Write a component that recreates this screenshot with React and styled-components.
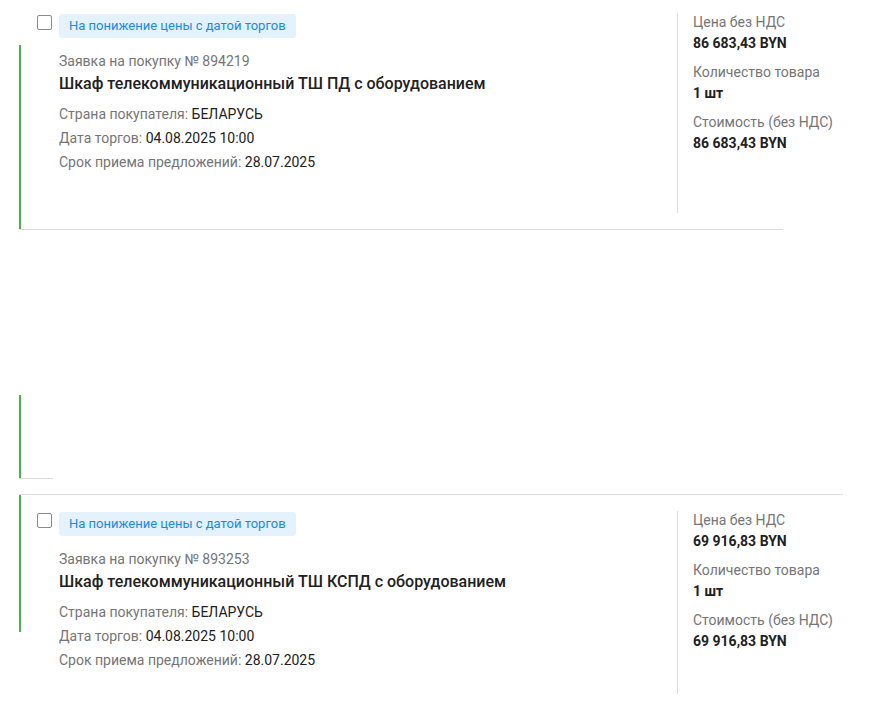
import React from 'react';
import styled, { createGlobalStyle } from 'styled-components';

const GlobalStyle = createGlobalStyle`
    body {
        margin: 0;
        background: #fff;
        font-family: Roboto, "Liberation Sans", sans-serif;
        color: #212121;
    }
`;

const List = styled.div`
    margin-top: -3px;
    padding-left: 19px;
    display: flex;
    flex-direction: column;
`;

const Card = styled.div`
    display: flex;
    width: ${p => p.$width}px;
    border-top: ${p => (p.$topLine ? '1px solid #dcdcdc' : 'none')};
    border-bottom: ${p => (p.$bottomLine ? '1px solid #dcdcdc' : 'none')};
    margin-top: ${p => p.$gap || 0}px;
    min-height: ${p => p.$minHeight || 0}px;
    box-sizing: border-box;
`;

const Rail = styled.div`
    flex: none;
    width: 2px;
    background: #4caf50;
    margin-top: ${p => p.$top}px;
    align-self: ${p => (p.$height ? 'flex-start' : 'stretch')};
    height: ${p => (p.$height ? `${p.$height}px` : 'auto')};
`;

const Body = styled.div`
    display: flex;
    padding: ${p => p.$padTop}px 0 ${p => p.$padBottom}px;
`;

const Main = styled.div`
    width: 656px;
    flex: none;
    box-sizing: border-box;
    padding: 1px 0 0 16px;
`;

const Header = styled.div`
    display: flex;
    align-items: flex-start;
    gap: 7px;
`;

const Check = styled.span`
    width: 15px;
    height: 15px;
    margin-top: 1px;
    box-sizing: border-box;
    border: 1.5px solid #8a8a8a;
    border-radius: 2px;
    background: #fff;
`;

const Badge = styled.span`
    height: 24px;
    line-height: 24px;
    padding: 0 10px;
    border-radius: 3px;
    background: #e3f2fd;
    color: #1e88e5;
    font-size: 13px;
`;

const Details = styled.div`
    padding-left: 22px;
`;

const Number = styled.div`
    margin-top: 13px;
    font-size: 14px;
    line-height: 20px;
    color: #757575;
`;

const Title = styled.div`
    margin-top: 2px;
    margin-bottom: 7px;
    font-size: 16px;
    line-height: 22px;
    font-weight: 500;
    color: #212121;
`;

const Meta = styled.div`
    font-size: 14px;
    line-height: 24px;
    color: #757575;
    span {
        color: #212121;
    }
`;

const Side = styled.div`
    flex: none;
    min-height: ${p => p.$height}px;
    border-left: 1px solid #dcdcdc;
    padding-left: 15px;
    white-space: nowrap;
`;

const Field = styled.div`
    margin-bottom: 10px;
`;

const Label = styled.div`
    font-size: 14px;
    line-height: 18px;
    color: #757575;
`;

const Value = styled.div`
    margin-top: 2px;
    font-size: 14px;
    line-height: 20px;
    font-weight: 700;
    color: #212121;
`;

const lots = [
    {
        id: 894219,
        title: 'Шкаф телекоммуникационный ТШ ПД с оборудованием',
        price: '86 683,43 BYN',
        width: 764,
        rail: { top: 48 },
        pad: [16, 16],
        side: 200,
        bottomLine: true,
    },
    {
        id: 893253,
        title: 'Шкаф телекоммуникационный ТШ КСПД с оборудованием',
        price: '69 916,83 BYN',
        width: 824,
        rail: { top: 0, height: 137 },
        pad: [16, 17],
        side: 183,
        topLine: true,
        gap: 15,
    },
];

const LotCard = ({ lot }) => (
    <Card $width={lot.width} $topLine={lot.topLine} $bottomLine={lot.bottomLine} $gap={lot.gap}>
        <Rail $top={lot.rail.top} $height={lot.rail.height} />
        <Body $padTop={lot.pad[0]} $padBottom={lot.pad[1]}>
            <Main>
                <Header>
                    <Check />
                    <Badge>На понижение цены с датой торгов</Badge>
                </Header>
                <Details>
                    <Number>Заявка на покупку № {lot.id}</Number>
                    <Title>{lot.title}</Title>
                    <Meta>Страна покупателя: <span>БЕЛАРУСЬ</span></Meta>
                    <Meta>Дата торгов: <span>04.08.2025 10:00</span></Meta>
                    <Meta>Срок приема предложений: <span>28.07.2025</span></Meta>
                </Details>
            </Main>
            <Side $height={lot.side}>
                <Field>
                    <Label>Цена без НДС</Label>
                    <Value>{lot.price}</Value>
                </Field>
                <Field>
                    <Label>Количество товара</Label>
                    <Value>1 шт</Value>
                </Field>
                <Field>
                    <Label>Стоимость (без НДС)</Label>
                    <Value>{lot.price}</Value>
                </Field>
            </Side>
        </Body>
    </Card>
);

const App = () => (
    <>
        <GlobalStyle />
        <List>
            <LotCard lot={lots[0]} />
            <Card $width={34} $bottomLine $minHeight={249}>
                <Rail $top={165} />
            </Card>
            <LotCard lot={lots[1]} />
        </List>
    </>
);

export default App;
